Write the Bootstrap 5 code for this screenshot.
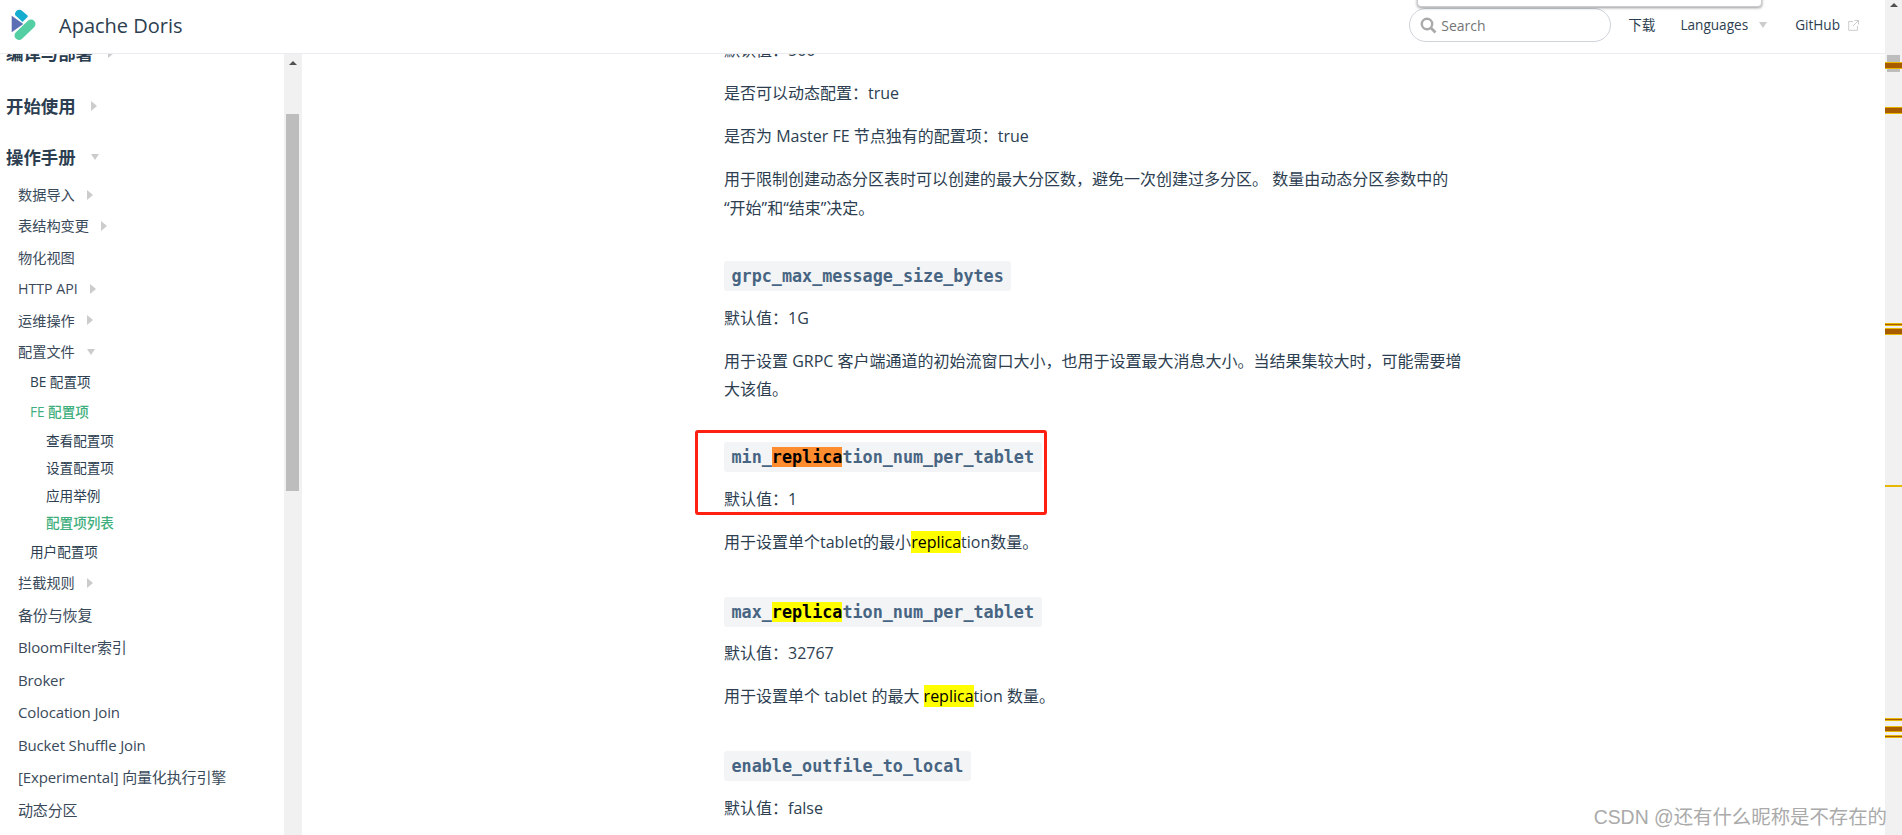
<!DOCTYPE html>
<html lang="zh"><head><meta charset="utf-8"><title>Apache Doris</title>
<link href="https://cdn.jsdelivr.net/npm/bootstrap@5.3.0/dist/css/bootstrap.min.css" rel="stylesheet">
<style>
html,body{height:835px;overflow:hidden}
body{font-family:"Open Sans","Noto Sans CJK SC",sans-serif;color:#2c3e50;font-size:15px;background:#fff;position:relative}
.pg{width:1885px;height:835px}
.topbar{height:54px;border-bottom:1px solid #eaecef;flex:none;position:relative;background:#fff;z-index:2}
.logo-svg{width:30px;height:36px;margin:6px 0 0 10px}
.brand{font-size:20px;margin-left:19px;color:#2c3e50;font-weight:500;line-height:52px}
.searchb{width:202px;height:34px;border:1px solid #cfd4db;border-radius:17px;margin:8px 0 0;color:#757575;font-size:14px;padding-left:10px;gap:4px}
.tlink{font-size:13.6px;font-weight:500;color:#2c3e50;line-height:50px}
.findbar{position:absolute;left:1417px;top:-10px;width:345px;height:17px;background:#fff;border:1px solid #c9cccf;border-radius:0 0 4px 4px;box-shadow:0 1px 3px rgba(0,0,0,.4);z-index:3}
.tri-d{display:inline-block;border-left:4.5px solid transparent;border-right:4.5px solid transparent;border-top:6px solid #ccc;margin-left:12px}
.tri-r{display:inline-block;border-top:5px solid transparent;border-bottom:5px solid transparent;border-left:6px solid #ccc;margin-left:12px}
.side{width:302px;flex:none;overflow:hidden;position:relative}
.sidelist{width:284px;margin-top:-25px}
.sb{background:#f1f1f1;width:18px;flex:none;padding:0 2px}
.sbup{width:0;height:0;border-left:4px solid transparent;border-right:4px solid transparent;border-bottom:4px solid #505050;margin:7px 0 0 3px}
.sbth{background:#bdbdbd;width:13px;height:377px;margin:49px 0 0}
.it{display:flex;align-items:center;white-space:nowrap}
.sec{font-size:17.4px;font-weight:700;height:57.5px;padding-left:6px}
.sec i{margin-left:15px}
.sec-first{height:48.5px}
.sec-last{height:44px}
.lv2{font-size:14.2px;height:31.4px;padding-left:18px;color:#3a4a5a}
.lv3{font-size:13.6px;height:30px;padding-left:30px;color:#2c3e50}
.lv4{font-size:13.6px;height:27.5px;padding-left:46px;color:#2c3e50}
.lvt{font-size:15px;height:32.5px;padding-left:18px;color:#3a4a5a;letter-spacing:-.15px}
.act{color:#3eaf7c;font-weight:500}
.maincol{flex:1;min-width:0;overflow:hidden;position:relative}
.docs{width:760px;margin-left:422px;margin-top:-18px;font-size:16px;color:#2c3e50}
.docs p{margin:0;line-height:28.5px}
.docs p.pgap{margin-top:14.5px}
.docs p.hd{margin:38.75px 0 -1.75px;line-height:30px;height:30px}
.docs p.hd.hd-wide{margin-top:40px}
.cd{display:block;width:max-content;font-family:"DejaVu Sans Mono",monospace;font-weight:700;font-size:16.75px;line-height:22px;background:#f3f4f5;color:#476582;padding:4px 7.5px;border-radius:3px;white-space:nowrap}
.hl{background:#ff0;color:#000}
.hl-or{background:#ff8c2e;color:#000}
.redbox{position:absolute;left:393px;top:376px;width:352px;height:85px;border:3px solid #ff2012;border-radius:3px}
.vscroll{position:absolute;right:0;top:0;width:17px;height:835px;background:#f1f1f1;z-index:4}
.vup{position:absolute;left:5px;top:3px;width:0;height:0;border-left:4px solid transparent;border-right:4px solid transparent;border-bottom:4px solid #505050}
.vth{position:absolute;left:2px;top:55px;width:13px;height:17px;background:#bdbdbd}
.mk{position:absolute;left:0;width:17px;background:#a85c00;border-top:1px solid #e8b800;border-bottom:1px solid #e8b800}
.wm{position:absolute;right:15px;top:804px;font-size:19.4px;color:#aaa;font-family:"Liberation Sans","Noto Sans CJK SC",sans-serif;z-index:5;line-height:26px}
</style></head><body>
<div class="findbar"></div>
<div class="pg d-flex flex-column">
<header class="topbar d-flex">
<svg class="logo-svg" viewBox="10 6 30 36"><path fill="#5b6fb5" d="M11.7 15.7V32.3L23.3 24Z"/><path fill="#14add0" d="M15 15a4.5 4.5 0 0 1 6-5L27 15q1.5 1 .5 2L22.5 22Z"/><path d="M31 24L19 35.5" fill="none" stroke="#53cfa3" stroke-width="9" stroke-linecap="round"/></svg>
<span class="brand">Apache Doris</span>
<div class="ms-auto d-flex">
<div class="searchb d-flex align-items-center"><svg width="17" height="17" viewBox="0 0 17 17"><circle cx="7" cy="7" r="5.2" fill="none" stroke="#aaa" stroke-width="2.4"/><path d="M11 11l4.5 4.5" stroke="#aaa" stroke-width="2.8"/></svg><span>Search</span></div>
<span class="tlink fw-normal" style="margin-left:17px">下载</span>
<span class="tlink d-inline-flex align-items-center" style="margin-left:25px;height:50px">Languages<i class="tri-d" style="margin-left:11px"></i></span>
<span class="tlink d-inline-flex align-items-center" style="margin-left:28px;height:50px;margin-right:26px">GitHub<svg class="ms-2" width="11" height="11" viewBox="0 0 11 11"><path d="M5 1.5H.7v8.8h8.8V6M6.5.5h4v4M10.5.5L5 6" fill="none" stroke="#ccc" stroke-width="1"/></svg></span>
</div>
</header>
<div class="d-flex flex-grow-1" style="min-height:0">
<aside class="side d-flex">
<div class="sidelist">
<div class="it sec sec-first">编译与部署<i class="tri-r"></i></div>
<div class="it sec">开始使用<i class="tri-r"></i></div>
<div class="it sec sec-last">操作手册<i class="tri-d"></i></div>
<div class="it lv2">数据导入<i class="tri-r"></i></div>
<div class="it lv2">表结构变更<i class="tri-r"></i></div>
<div class="it lv2">物化视图</div>
<div class="it lv2">HTTP API<i class="tri-r"></i></div>
<div class="it lv2">运维操作<i class="tri-r"></i></div>
<div class="it lv2">配置文件<i class="tri-d"></i></div>
<div class="it lv3">BE 配置项</div>
<div class="it lv3 act">FE 配置项</div>
<div class="it lv4">查看配置项</div>
<div class="it lv4">设置配置项</div>
<div class="it lv4">应用举例</div>
<div class="it lv4 act">配置项列表</div>
<div class="it lv3">用户配置项</div>
<div class="it lv2">拦截规则<i class="tri-r"></i></div>
<div class="it lvt">备份与恢复</div>
<div class="it lvt">BloomFilter索引</div>
<div class="it lvt">Broker</div>
<div class="it lvt">Colocation Join</div>
<div class="it lvt">Bucket Shuffle Join</div>
<div class="it lvt">[Experimental] 向量化执行引擎</div>
<div class="it lvt">动态分区</div>
</div>
<div class="sb"><div class="sbup"></div><div class="sbth"></div></div>
</aside>
<main class="maincol">
<div class="docs">
<p>默认值：500</p>
<p class="pgap">是否可以动态配置：true</p>
<p class="pgap">是否为 Master FE 节点独有的配置项：true</p>
<p class="pgap">用于限制创建动态分区表时可以创建的最大分区数，避免一次创建过多分区。 数量由动态分区参数中的<br>“开始”和“结束”决定。</p>
<p class="hd"><span class="cd">grpc_max_message_size_bytes</span></p>
<p class="pgap">默认值：1G</p>
<p class="pgap">用于设置 GRPC 客户端通道的初始流窗口大小，也用于设置最大消息大小。当结果集较大时，可能需要增<br>大该值。</p>
<p class="hd"><span class="cd">min_<span class="hl-or">replica</span>tion_num_per_tablet</span></p>
<p class="pgap">默认值：1</p>
<p class="pgap">用于设置单个tablet的最小<span class="hl">replica</span>tion数量。</p>
<p class="hd hd-wide"><span class="cd">max_<span class="hl">replica</span>tion_num_per_tablet</span></p>
<p class="pgap">默认值：32767</p>
<p class="pgap">用于设置单个 tablet 的最大 <span class="hl">replica</span>tion 数量。</p>
<p class="hd hd-wide"><span class="cd">enable_outfile_to_local</span></p>
<p class="pgap">默认值：false</p>
</div>
<div class="redbox"></div>
</main>
</div>
</div>
<div class="vscroll"><div class="vup"></div><div class="vth"></div>
<div class="mk" style="top:62px;height:7px"></div><div class="mk" style="top:107px;height:7px"></div><div class="mk" style="top:323px;height:3px"></div><div class="mk" style="top:328px;height:7px"></div><div class="mk" style="top:485px;height:2px"></div><div class="mk" style="top:718px;height:3px"></div><div class="mk" style="top:726px;height:6px"></div><div class="mk" style="top:735px;height:3px"></div></div>
<div class="wm">CSDN @还有什么昵称是不存在的</div>
<script src="https://cdn.jsdelivr.net/npm/bootstrap@5.3.0/dist/js/bootstrap.bundle.min.js"></script>
</body></html>
